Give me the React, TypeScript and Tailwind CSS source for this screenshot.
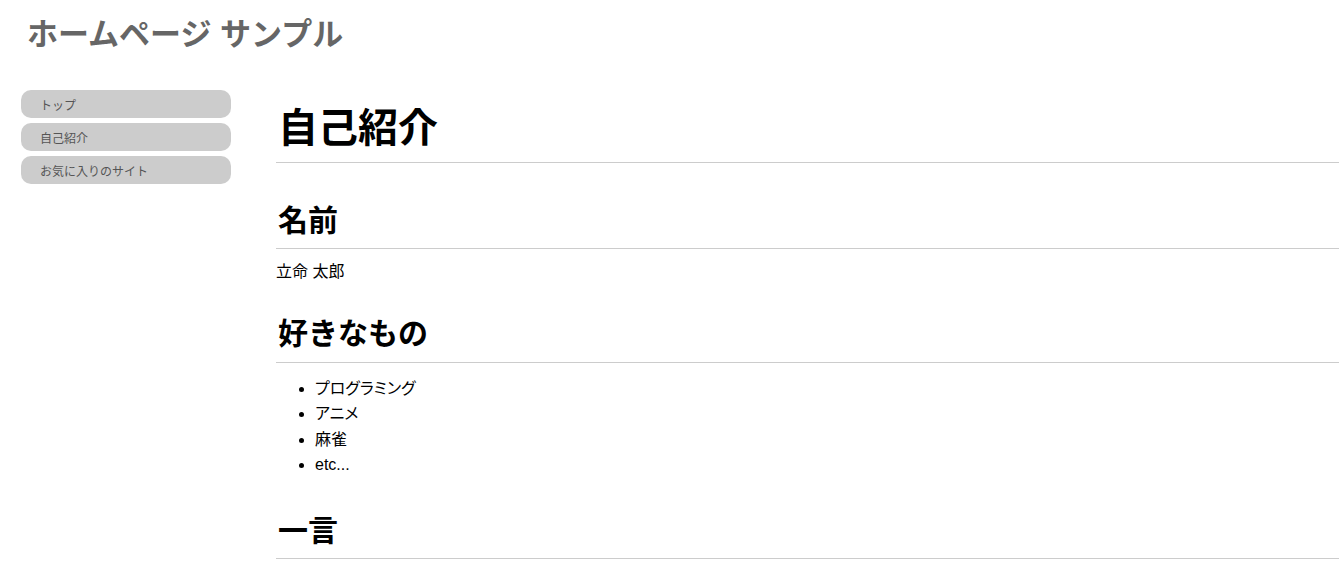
import React from "react";

const font = { fontFamily: '"Liberation Sans", "Noto Sans CJK JP", sans-serif' };

export default function App() {
  const nav = ["トップ", "自己紹介", "お気に入りのサイト"];
  const likes = ["プログラミング", "アニメ", "麻雀", "etc..."];
  return (
    <div className="w-[1341px] min-h-[570px] bg-white text-black" style={font}>
      <header className="pl-[27px] pt-[17px] h-[90px]">
        <div className="text-[31px] leading-[36px] font-bold text-[#666]">ホームページ サンプル</div>
      </header>
      <div className="flex">
        <nav className="ml-[21px] w-[210px] flex flex-col gap-[5px] shrink-0">
          {nav.map((n) => (
            <div
              key={n}
              className="h-[28px] rounded-[10px] bg-[#cccccc] pl-[19px] pt-[5px] text-[12px] leading-[23px] text-[#555]"
            >
              {n}
            </div>
          ))}
        </nav>
        <main className="ml-[45px] mr-[2px] flex-1 flex flex-col">
          <h1 className="mt-[13px] text-[40px] leading-[50px] font-bold pb-[9px] border-b border-[#cccccc] pl-[2px]">
            自己紹介
          </h1>
          <h2 className="mt-[38px] text-[30px] leading-[40px] font-bold pb-[7px] border-b border-[#cccccc] pl-[2px]">
            名前
          </h2>
          <p className="mt-[11px] text-[16px] leading-[24px]">立命 太郎</p>
          <h2 className="mt-[30px] text-[30px] leading-[40px] font-bold pb-[8px] border-b border-[#cccccc] pl-[2px]">
            好きなもの
          </h2>
          <ul className="mt-[13px] pl-[39px] list-disc text-[16px] leading-[25.33px] [font-feature-settings:'palt']">
            {likes.map((l) => (
              <li key={l}>{l}</li>
            ))}
          </ul>
          <h2 className="mt-[34px] text-[30px] leading-[40px] font-bold pb-[7px] border-b border-[#cccccc] pl-[2px]">
            一言
          </h2>
        </main>
      </div>
    </div>
  );
}
